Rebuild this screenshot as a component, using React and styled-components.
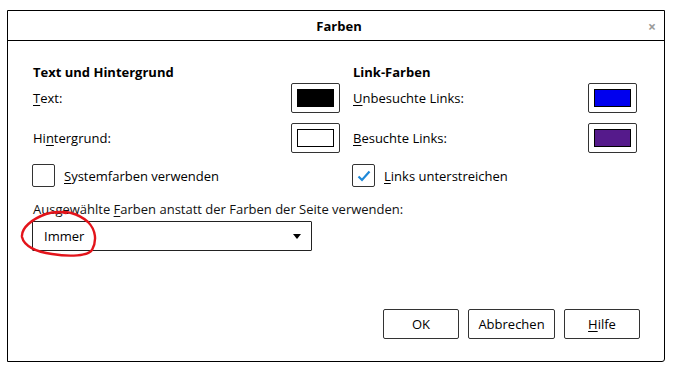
import React from "react";
import styled, { createGlobalStyle } from "styled-components";

const GlobalStyle = createGlobalStyle`
  html, body {
    margin: 0;
    padding: 0;
    background: #fff;
  }
  body {
    font-family: "Open Sans", "Noto Sans", sans-serif;
    font-size: 13px;
    color: #000;
  }
`;

const Page = styled.div`
  position: relative;
  width: 679px;
  height: 374px;
  padding: 10px 0 0 7px;
  box-sizing: border-box;
`;

const Dialog = styled.div`
  width: 658px;
  height: 352px;
  box-sizing: border-box;
  border: 1px solid #000;
  border-radius: 0 0 3px 0;
  display: flex;
  flex-direction: column;
  background: #fff;
`;

const TitleBar = styled.div`
  position: relative;
  height: 30px;
  box-sizing: border-box;
  border-bottom: 1px solid #000;
  display: flex;
  align-items: center;
  justify-content: center;
  padding-left: 6px;
  font-weight: bold;
  font-size: 13px;
`;

const Close = styled.span`
  position: absolute;
  right: 8px;
  top: 6px;
  color: #9a9a9a;
  font-size: 14px;
  font-weight: bold;
`;

const Body = styled.div`
  flex: 1;
  display: flex;
  flex-direction: column;
  padding: 23px 24px 22px 25px;
`;

const Columns = styled.div`
  display: grid;
  grid-template-columns: 307px 284px;
  column-gap: 13px;
`;

const Section = styled.div`
  display: flex;
  flex-direction: column;
`;

const Heading = styled.div`
  font-weight: bold;
  line-height: 16px;
  height: 16px;
`;

const Row = styled.div`
  display: flex;
  align-items: center;
  justify-content: space-between;
  height: 30px;
  margin-top: ${(p) => p.$top}px;
`;

const Label = styled.span`
  line-height: 16px;
`;

const Key = styled.span`
  text-decoration: underline;
  text-underline-offset: 2px;
`;

const ColorButton = styled.div`
  width: 49px;
  height: 30px;
  box-sizing: border-box;
  border: 1px solid #333;
  border-radius: 2px;
  display: flex;
  align-items: center;
  justify-content: center;
`;

const Swatch = styled.div`
  width: 37px;
  height: 18px;
  box-sizing: border-box;
  border: 1px solid #000;
  background: ${(p) => p.$color};
`;

const CheckRow = styled.div`
  display: flex;
  align-items: center;
  height: 23px;
  margin-top: 11px;
  margin-left: -1px;
`;

const CheckBox = styled.div`
  width: 23px;
  height: 23px;
  box-sizing: border-box;
  border: 1px solid #333;
  border-radius: 2px;
  display: flex;
  align-items: center;
  justify-content: center;
  margin-right: 9px;
`;

const SelectLabel = styled.div`
  line-height: 16px;
  margin-top: 14px;
  color: #111;
`;

const Select = styled.div`
  width: 280px;
  height: 30px;
  box-sizing: border-box;
  margin-top: 4px;
  margin-left: -1px;
  border: 1px solid #222;
  border-radius: 1px;
  display: flex;
  align-items: center;
  justify-content: space-between;
  padding: 0 10px 0 11px;
`;

const Arrow = styled.span`
  width: 0;
  height: 0;
  border-left: 4px solid transparent;
  border-right: 4px solid transparent;
  border-top: 5px solid #000;
`;

const Footer = styled.div`
  margin-top: auto;
  display: flex;
  justify-content: flex-end;
  gap: 9px;
`;

const Button = styled.div`
  width: ${(p) => p.$w}px;
  height: 30px;
  box-sizing: border-box;
  border: 1px solid #333;
  border-radius: 2px;
  display: flex;
  align-items: center;
  justify-content: center;
`;

const Scribble = styled.svg`
  position: absolute;
  left: 0;
  top: 0;
  pointer-events: none;
`;

function Check() {
  return (
    <svg width="14" height="12" viewBox="0 0 14 12">
      <path d="M1.5 6.5 L5 10 L12.5 1.5" fill="none" stroke="#1e88d8" strokeWidth="2.2" />
    </svg>
  );
}

export default function App() {
  return (
    <Page>
      <GlobalStyle />
      <Dialog>
        <TitleBar>
          Farben
          <Close>×</Close>
        </TitleBar>
        <Body>
          <Columns>
            <Section>
              <Heading>Text und Hintergrund</Heading>
              <Row $top={3}>
                <Label><Key>T</Key>ext:</Label>
                <ColorButton><Swatch $color="#000" /></ColorButton>
              </Row>
              <Row $top={10}>
                <Label>Hi<Key>n</Key>tergrund:</Label>
                <ColorButton><Swatch $color="#fff" /></ColorButton>
              </Row>
              <CheckRow>
                <CheckBox />
                <Label><Key>S</Key>ystemfarben verwenden</Label>
              </CheckRow>
            </Section>
            <Section>
              <Heading>Link-Farben</Heading>
              <Row $top={3}>
                <Label><Key>U</Key>nbesuchte Links:</Label>
                <ColorButton><Swatch $color="#0000ee" /></ColorButton>
              </Row>
              <Row $top={10}>
                <Label><Key>B</Key>esuchte Links:</Label>
                <ColorButton><Swatch $color="#551a8b" /></ColorButton>
              </Row>
              <CheckRow>
                <CheckBox><Check /></CheckBox>
                <Label><Key>L</Key>inks unterstreichen</Label>
              </CheckRow>
            </Section>
          </Columns>
          <SelectLabel>Ausgewählte <Key>F</Key>arben anstatt der Farben der Seite verwenden:</SelectLabel>
          <Select>
            <Label>Immer</Label>
            <Arrow />
          </Select>
          <Footer>
            <Button $w={76}>OK</Button>
            <Button $w={87}>Abbrechen</Button>
            <Button $w={76}><span><Key>H</Key>ilfe</span></Button>
          </Footer>
        </Body>
      </Dialog>
      <Scribble width="679" height="374" viewBox="0 0 679 374">
        <path
          d="M56 213 C64 210 78 213 88 222 C96 230 97 241 92 250 C88 256 70 257 52 254 C36 252 24 246 22 237 C21 228 32 219 46 214 C52 212 58 211 66 213"
          fill="none"
          stroke="#e3141b"
          strokeWidth="2.4"
          strokeLinecap="round"
        />
      </Scribble>
    </Page>
  );
}
